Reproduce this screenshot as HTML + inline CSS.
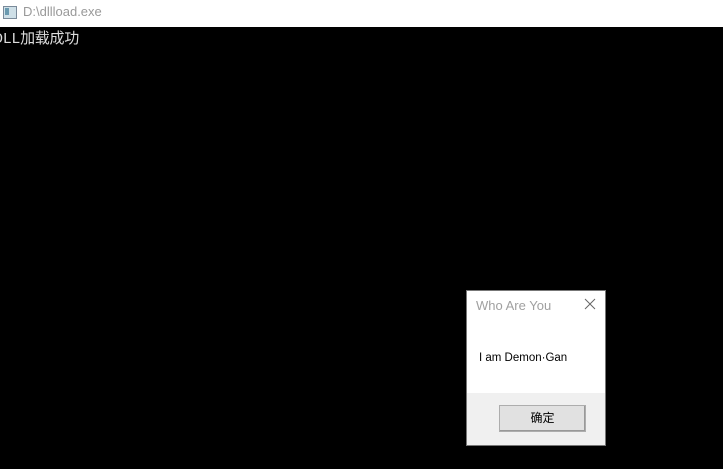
<!DOCTYPE html>
<html><head><style>
body{margin:0;width:723px;height:469px;background:#000;position:relative;overflow:hidden;font-family:"Liberation Sans","Noto Sans CJK SC",sans-serif}
.tb{position:absolute;left:0;top:0;width:723px;height:27px;background:#fff}
.tb span{position:absolute;left:23px;top:4px;font-size:13px;color:#999}
.ic{position:absolute;left:3px;top:6px;width:12px;height:11px;border:1px solid #7a8a9a;background:#cfe0e8}
.ic:after{content:"";position:absolute;left:1px;top:1px;width:4px;height:7px;background:#6a9ab0}
.con{position:absolute;left:-6px;top:27px;color:#ddd;font-size:15px;letter-spacing:-0.3px;font-family:"Liberation Mono","Noto Sans CJK SC",monospace}
.dlg{position:absolute;left:466px;top:290px;width:138px;height:154px;background:#fff;border:1px solid #777}
.dlg .t{position:absolute;left:9px;top:7px;font-size:13px;color:#a0a0a0}
.dlg .x{position:absolute;left:117px;top:7px}
.dlg .m{position:absolute;left:12px;top:61px;font-size:11.5px;color:#000}
.dlg .f{position:absolute;left:0;top:102px;width:138px;height:52px;background:#f0f0f0}
.btn{position:absolute;left:32px;top:12px;width:85px;height:25px;background:#e1e1e1;border:1px solid #adadad;font-size:12px;text-align:center;line-height:25px;box-shadow:inset -1px -1px #999}
</style></head><body>
<div class="tb"><div class="ic"></div><span>D:\dllload.exe</span></div>
<div class="con">DLL加载成功</div>
<div class="dlg">
<div class="t">Who Are You</div>
<svg class="x" width="12" height="12"><path d="M1 1L11 11M11 1L1 11" stroke="#666" stroke-width="1"/></svg>
<div class="m">I am Demon·Gan</div>
<div class="f"><div class="btn">确定</div></div>
</div>
</body></html>
